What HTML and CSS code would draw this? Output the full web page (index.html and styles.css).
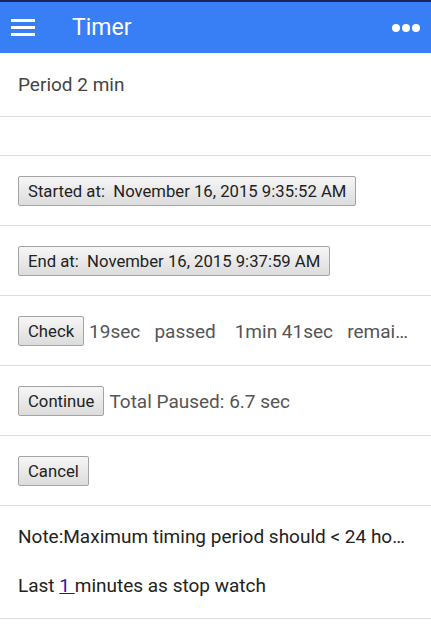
FILE: index.html
```html
<!DOCTYPE html>
<html lang="en">
<head>
    <meta charset="UTF-8">
    <meta name="viewport" content="width=device-width, initial-scale=1.0">
    <title>Timer</title>
    <link rel="stylesheet" href="styles.css">
</head>
<body>
    <div class="bar">
        <div class="menu-icon"><span></span><span></span><span></span></div>
        <h1 class="title">Timer</h1>
        <div class="more-icon"><span></span><span></span><span></span></div>
    </div>

    <div class="list">
        <div class="item item-text">Period 2 min</div>
        <div class="item item-empty"></div>
        <div class="item item-btn">
            <button class="btn">Started at:&nbsp; November 16, 2015 9:35:52 AM</button>
        </div>
        <div class="item item-btn">
            <button class="btn">End at:&nbsp; November 16, 2015 9:37:59 AM</button>
        </div>
        <div class="item item-btn">
            <button class="btn">Check</button>
            <span class="info">19sec &nbsp; passed &nbsp;&nbsp; 1min 41sec &nbsp; remaining</span>
        </div>
        <div class="item item-btn">
            <button class="btn">Continue</button>
            <span class="info">Total Paused: 6.7 sec</span>
        </div>
        <div class="item item-btn">
            <button class="btn">Cancel</button>
        </div>
        <div class="item item-note">
            <p class="note">Note:Maximum timing period should &lt; 24 hours</p>
            <p class="note">Last <a href="#" class="link">1 </a>minutes as stop watch</p>
        </div>
    </div>
</body>
</html>
```

FILE: styles.css
```css
body {
    margin: 0;
    background-color: #fff;
    font-family: Roboto, "Noto Sans", sans-serif;
    color: #444;
}

.bar {
    display: flex;
    align-items: center;
    height: 51px;
    background-color: #387ef5;
    border-top: 2px solid #1b2358;
    color: #fff;
}

.menu-icon {
    display: flex;
    flex-direction: column;
    gap: 4px;
    width: 24px;
    margin-left: 11px;
}

.menu-icon span {
    display: block;
    height: 3px;
    background-color: #fff;
}

.title {
    margin: 0 0 0 37px;
    font-size: 23px;
    font-weight: 400;
    flex: 1;
}

.more-icon {
    display: flex;
    gap: 2px;
    margin-right: 11px;
}

.more-icon span {
    width: 8px;
    height: 8px;
    border-radius: 50%;
    background-color: #fff;
}

.item {
    display: flex;
    align-items: center;
    padding: 0 18px;
    border-bottom: 1px solid #ddd;
    font-size: 19px;
    white-space: nowrap;
    overflow: hidden;
}

.item-text {
    height: 63px;
}

.item-empty {
    height: 38px;
}

.item-btn {
    padding-top: 20px;
    padding-bottom: 19px;
}

.btn {
    height: 30px;
    padding: 0 9px;
    background: linear-gradient(#f6f6f6, #dcdcdc);
    border: 1px solid #a3a3a3;
    border-radius: 2px;
    font-family: Roboto, "Noto Sans", sans-serif;
    font-size: 16.7px;
    color: #222;
    flex-shrink: 0;
}

.info {
    margin-left: 5px;
    color: #555;
    overflow: hidden;
    text-overflow: ellipsis;
}

.item-note {
    display: block;
    padding-top: 20px;
    padding-bottom: 21px;
    color: #222;
}

.note {
    margin: 0;
    line-height: 22px;
    overflow: hidden;
    text-overflow: ellipsis;
}

.note + .note {
    margin-top: 27px;
}

.link {
    color: #1a1aa6;
}
```
